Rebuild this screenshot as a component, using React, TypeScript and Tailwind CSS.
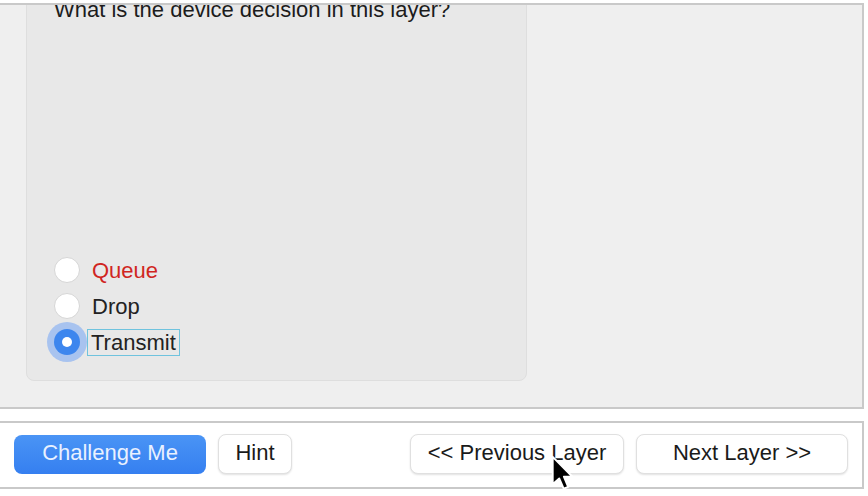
import React from "react";

const font = { fontFamily: '"Liberation Sans", Arial, sans-serif' };

const options = [
    { label: "Queue", color: "text-[#d0261f]", selected: false },
    { label: "Drop", color: "text-[#222]", selected: false },
    { label: "Transmit", color: "text-[#222]", selected: true },
];

const Radio = ({ selected }: { selected: boolean }) => {
    if (selected) {
        return (
            <span className="w-[26px] h-[26px] rounded-full bg-[#3d86ee] ring-[7px] ring-[#a8c3ef] flex items-center justify-center shrink-0">
                <span className="w-[10px] h-[10px] rounded-full bg-white" />
            </span>
        );
    }
    return <span className="w-[26px] h-[26px] rounded-full bg-white border border-[#d6d6d6] shrink-0" />;
};

const Cursor = () => (
    <svg className="absolute left-[551px] top-[455px]" width="24" height="38" viewBox="0 0 14 22">
        <path d="M1 1 L1 17 L4.8 13.6 L7.4 19.6 L10 18.5 L7.5 12.6 L12.5 12.6 Z" fill="#000" stroke="#fff" strokeWidth="1.1" strokeLinejoin="round" />
    </svg>
);

const btn = "h-[40px] pb-[4px] rounded-lg bg-white border border-[#e0e0e0] shadow-[0_1px_2px_rgba(0,0,0,0.12)] text-[#1a1a1a] text-[22px]";

const App = () => {
    return (
        <div className="relative w-[868px] h-[496px] bg-white overflow-hidden" style={font}>
            <div className="mt-[3px] w-[864px] h-[406px] border-2 border-l-0 border-[#c9c9c9] bg-[#efefef] overflow-hidden pl-[26px]">
                <div className="mt-[-28px] w-[501px] h-[404px] bg-[#e8e8e8] border border-[#dedede] rounded-lg pt-[20px] pl-[27px] pb-[25px] flex flex-col">
                    <div className="text-[22px] leading-6 text-[#1c1c1c] whitespace-nowrap">What is the device decision in this layer?</div>
                    <div className="mt-auto flex flex-col gap-[10px]">
                        {options.map((o) => (
                            <div key={o.label} className="flex items-center h-[26px]">
                                <Radio selected={o.selected} />
                                <span
                                    className={
                                        o.selected
                                            ? "ml-[7px] px-[3px] h-[27px] flex items-center border border-[#6fc3de] text-[22px] " + o.color
                                            : "ml-[12px] text-[22px] " + o.color
                                    }
                                >
                                    {o.label}
                                </span>
                            </div>
                        ))}
                    </div>
                </div>
            </div>

            <div className="mt-[12px] w-[864px] h-[68px] border-2 border-l-0 border-[#c9c9c9] bg-white flex items-center pl-[14px] pb-[2px]">
                <button className="w-[192px] h-[39px] pb-[4px] rounded-lg bg-gradient-to-b from-[#4a94f5] to-[#357ff0] text-[#e9f1ff] text-[22px]">
                    Challenge Me
                </button>
                <button className={"ml-[12px] w-[74px] " + btn}>Hint</button>
                <button className={"ml-[118px] w-[214px] " + btn}>&lt;&lt; Previous Layer</button>
                <button className={"ml-[12px] w-[212px] " + btn}>Next Layer &gt;&gt;</button>
            </div>

            <Cursor />
        </div>
    );
};

export default App;
